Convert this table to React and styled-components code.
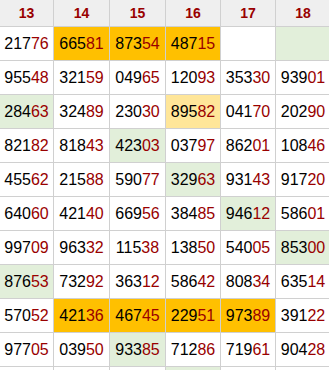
import React from "react";
import styled, { createGlobalStyle } from "styled-components";

const GlobalStyle = createGlobalStyle`
  html, body {
    margin: 0;
    padding: 0;
    overflow: hidden;
    background: #ffffff;
  }
`;

const Grid = styled.div`
  display: grid;
  grid-template-columns: 53px 55px 55px 54px 54px 54px;
  grid-auto-rows: 33px;
  grid-template-rows: 26px;
  gap: 1px;
  background: #d0d0d0;
  width: 330px;
  font-family: "Liberation Sans", Arial, sans-serif;
`;

const HeadCell = styled.div`
  display: flex;
  align-items: center;
  justify-content: center;
  background: #efefef;
  color: #990000;
  font-weight: bold;
  font-size: 14px;
`;

const fills = {
  orange: "#ffc000",
  pale: "#ffe699",
  green: "#e2efda",
  none: "#ffffff",
};

const Cell = styled.div`
  display: flex;
  align-items: center;
  justify-content: center;
  background: ${(props) => fills[props.$fill || "none"]};
  font-size: 16px;
  color: #000000;
`;

const Tail = styled.span`
  color: #990000;
`;

const headers = ["13", "14", "15", "16", "17", "18"];

const rows = [
  [["21776"], ["66581", "orange"], ["87354", "orange"], ["48715", "orange"], [""], ["", "green"]],
  [["95548"], ["32159"], ["04965"], ["12093"], ["35330"], ["93901"]],
  [["28463", "green"], ["32489"], ["23030"], ["89582", "pale"], ["04170"], ["20290"]],
  [["82182"], ["81843"], ["42303", "green"], ["03797"], ["86201"], ["10846"]],
  [["45562"], ["21588"], ["59077"], ["32963", "green"], ["93143"], ["91720"]],
  [["64060"], ["42140"], ["66956"], ["38485"], ["94612", "green"], ["58601"]],
  [["99709"], ["96332"], ["11538"], ["13850"], ["54005"], ["85300", "green"]],
  [["87653", "green"], ["73292"], ["36312"], ["58642"], ["80834"], ["63514"]],
  [["57052"], ["42136", "orange"], ["46745", "orange"], ["22951", "orange"], ["97389", "orange"], ["39122"]],
  [["97705"], ["03950"], ["93385", "green"], ["71286"], ["71961"], ["90428"]],
  [[""], [""], [""], ["", "green"], [""], [""]],
];

function Num({ value }) {
  if (!value) return null;
  return (
    <>
      {value.slice(0, 3)}
      <Tail>{value.slice(3)}</Tail>
    </>
  );
}

export default function App() {
  return (
    <>
      <GlobalStyle />
      <Grid>
        {headers.map((h) => (
          <HeadCell key={h}>{h}</HeadCell>
        ))}
        {rows.map((row, r) =>
          row.map(([value, fill], c) => (
            <Cell key={`${r}-${c}`} $fill={fill}>
              <Num value={value} />
            </Cell>
          ))
        )}
      </Grid>
    </>
  );
}
